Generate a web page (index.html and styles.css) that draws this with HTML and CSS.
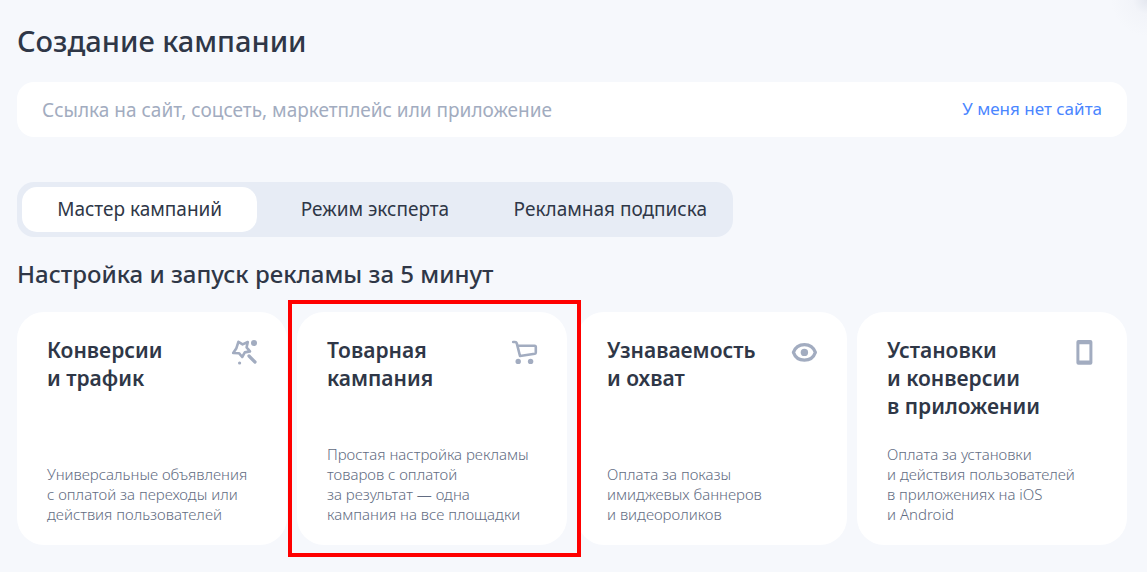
FILE: index.html
```
<!DOCTYPE html>
<html lang="ru">
  <head>
    <meta charset="UTF-8" />
    <meta name="viewport" content="width=device-width, initial-scale=1.0" />
    <title>Создание кампании</title>
    <link rel="stylesheet" href="styles.css">
  </head>
  <body>
    <main class="page">
      <h1>Создание кампании</h1>

      <form class="site-form">
        <input
          type="url"
          class="site-input"
          name="site"
          aria-label="Ссылка на сайт"
          placeholder="Ссылка на сайт, соцсеть, маркетплейс или приложение"
        />
        <a href="#" class="no-site">У меня нет сайта</a>
      </form>

      <div class="tabs">
        <button type="button" class="tab active">Мастер кампаний</button>
        <button type="button" class="tab">Режим эксперта</button>
        <button type="button" class="tab">Рекламная подписка</button>
      </div>

      <h2>Настройка и запуск рекламы за 5 минут</h2>

      <div class="cards">
        <div class="card">
          <div class="card-top">
            <h3>Конверсии<br />и трафик</h3>
            <svg class="icon" viewBox="0 0 28 28">
              <path class="line" d="M8.4 3.8 L12.6 6.4 L17.8 4 L16.6 9.4 L20 13.4 L14.8 14.4 L12.2 19 L9 15.2 L3.2 15 L6.4 10.2 Z" />
              <path class="line thick" d="M19 18 L25 24" />
              <circle cx="24" cy="5" r="3" />
              <circle cx="9.6" cy="25" r="1.6" />
            </svg>
          </div>
          <p>Универсальные объявления<br />с оплатой за переходы или<br />действия пользователей</p>
        </div>

        <div class="card selected">
          <div class="card-top">
            <h3>Товарная<br />кампания</h3>
            <svg class="icon" viewBox="0 0 28 28">
              <path class="line" d="M3.2 4 H5 Q6.4 4 6.8 5.4 L10 18 L24.8 15.8 Q25.8 15.6 25.8 14.6 V9 Q25.8 7.8 24.6 7.8 H7.6" />
              <circle cx="8.2" cy="23.4" r="2.7" />
              <circle cx="20.6" cy="23.4" r="2.7" />
            </svg>
          </div>
          <p>Простая настройка рекламы<br />товаров с оплатой<br />за результат — одна<br />кампания на все площадки</p>
        </div>

        <div class="card">
          <div class="card-top">
            <h3>Узнаваемость<br />и охват</h3>
            <svg class="icon" viewBox="0 0 28 28">
              <path class="line thick" d="M3.4 14.4 C5.2 9.4 9.2 6.6 14.4 6.6 S23.6 9.4 25.4 14.4 C23.6 19.4 19.6 22.2 14.4 22.2 S5.2 19.4 3.4 14.4 Z" />
              <circle cx="14.4" cy="14.4" r="3.7" />
            </svg>
          </div>
          <p>Оплата за показы<br />имиджевых баннеров<br />и видеороликов</p>
        </div>

        <div class="card">
          <div class="card-top">
            <h3>Установки<br />и конверсии<br />в приложении</h3>
            <svg class="icon" viewBox="0 0 28 28">
              <path fill-rule="evenodd" d="M8.4 2 H20.4 Q22.4 2 22.4 4 V24.8 Q22.4 26.8 20.4 26.8 H8.4 Q6.4 26.8 6.4 24.8 V4 Q6.4 2 8.4 2 Z M9.4 6.2 V22.6 H19.4 V6.2 Z" />
            </svg>
          </div>
          <p>Оплата за установки<br />и действия пользователей<br />в приложениях на iOS<br />и Android</p>
        </div>
      </div>
    </main>
  </body>
</html>
```
FILE: styles.css
```
* {
  box-sizing: border-box;
}

body {
  margin: 0;
  min-height: 100vh;
  font-family: "Noto Sans", "Open Sans", sans-serif;
  color: #2f3747;
  background: radial-gradient(circle at 100% 0, #e4e7ef 0, #f2f4f9 14px, #f6f8fc 36px) #f6f8fc;
}

h1,
h2,
h3,
p {
  margin: 0;
}

.page {
  padding: 21px 20px 27px 17px;
}

h1 {
  margin-bottom: 21px;
  font-size: 29px;
  font-weight: 500;
  line-height: 40px;
}

.site-form {
  display: flex;
  align-items: center;
  height: 55px;
  margin-bottom: 45px;
  padding: 0 25px;
  border-radius: 17px;
  background-color: #fff;
}

.site-input {
  flex: 1;
  min-width: 0;
  padding: 0;
  border: 0;
  outline: 0;
  background: none;
  font-family: inherit;
  font-size: 19px;
  color: inherit;
}

.site-input::placeholder {
  color: #a2acc0;
  opacity: 1;
}

.no-site {
  padding-bottom: 2px;
  font-size: 17px;
  color: #4a86ff;
  text-decoration: none;
}

.tabs {
  display: inline-grid;
  grid-template-columns: repeat(3, 1fr);
  min-width: 716px;
  margin-bottom: 20px;
  padding: 5px;
  border-radius: 17px;
  background-color: #e7ecf5;
  vertical-align: top;
}

.tab {
  height: 45px;
  padding: 0 16px 2px;
  border: 0;
  border-radius: 15px;
  background: none;
  font-family: inherit;
  font-size: 19px;
  color: inherit;
  cursor: pointer;
}

.tab.active {
  background-color: #fff;
}

h2 {
  margin-bottom: 21px;
  font-size: 24px;
  font-weight: 500;
  line-height: 34px;
}

.cards {
  display: grid;
  grid-template-columns: repeat(4, 1fr);
  gap: 10px;
}

.card {
  position: relative;
  display: flex;
  flex-direction: column;
  justify-content: space-between;
  gap: 24px;
  padding: 24px 29px 21px 30px;
  border-radius: 27px;
  background-color: #fff;
}

/* red frame around the highlighted card */
.card.selected::after {
  content: "";
  position: absolute;
  z-index: 1;
  inset: -12px -14px -12px -9px;
  border: 4px solid #ff0000;
}

.card-top {
  display: flex;
  justify-content: space-between;
}

h3 {
  font-size: 21px;
  font-weight: 600;
  line-height: 28px;
}

.icon {
  flex: none;
  width: 28px;
  height: 28px;
  margin-top: 2px;
  fill: #a2acc0;
}

.line {
  fill: none;
  stroke: #a2acc0;
  stroke-width: 2.6;
  stroke-linecap: round;
  stroke-linejoin: round;
}

.thick {
  stroke-width: 3.2;
}

.card p {
  font-size: 15px;
  font-weight: 300;
  line-height: 20px;
  color: #626c82;
  white-space: nowrap;
}
```
